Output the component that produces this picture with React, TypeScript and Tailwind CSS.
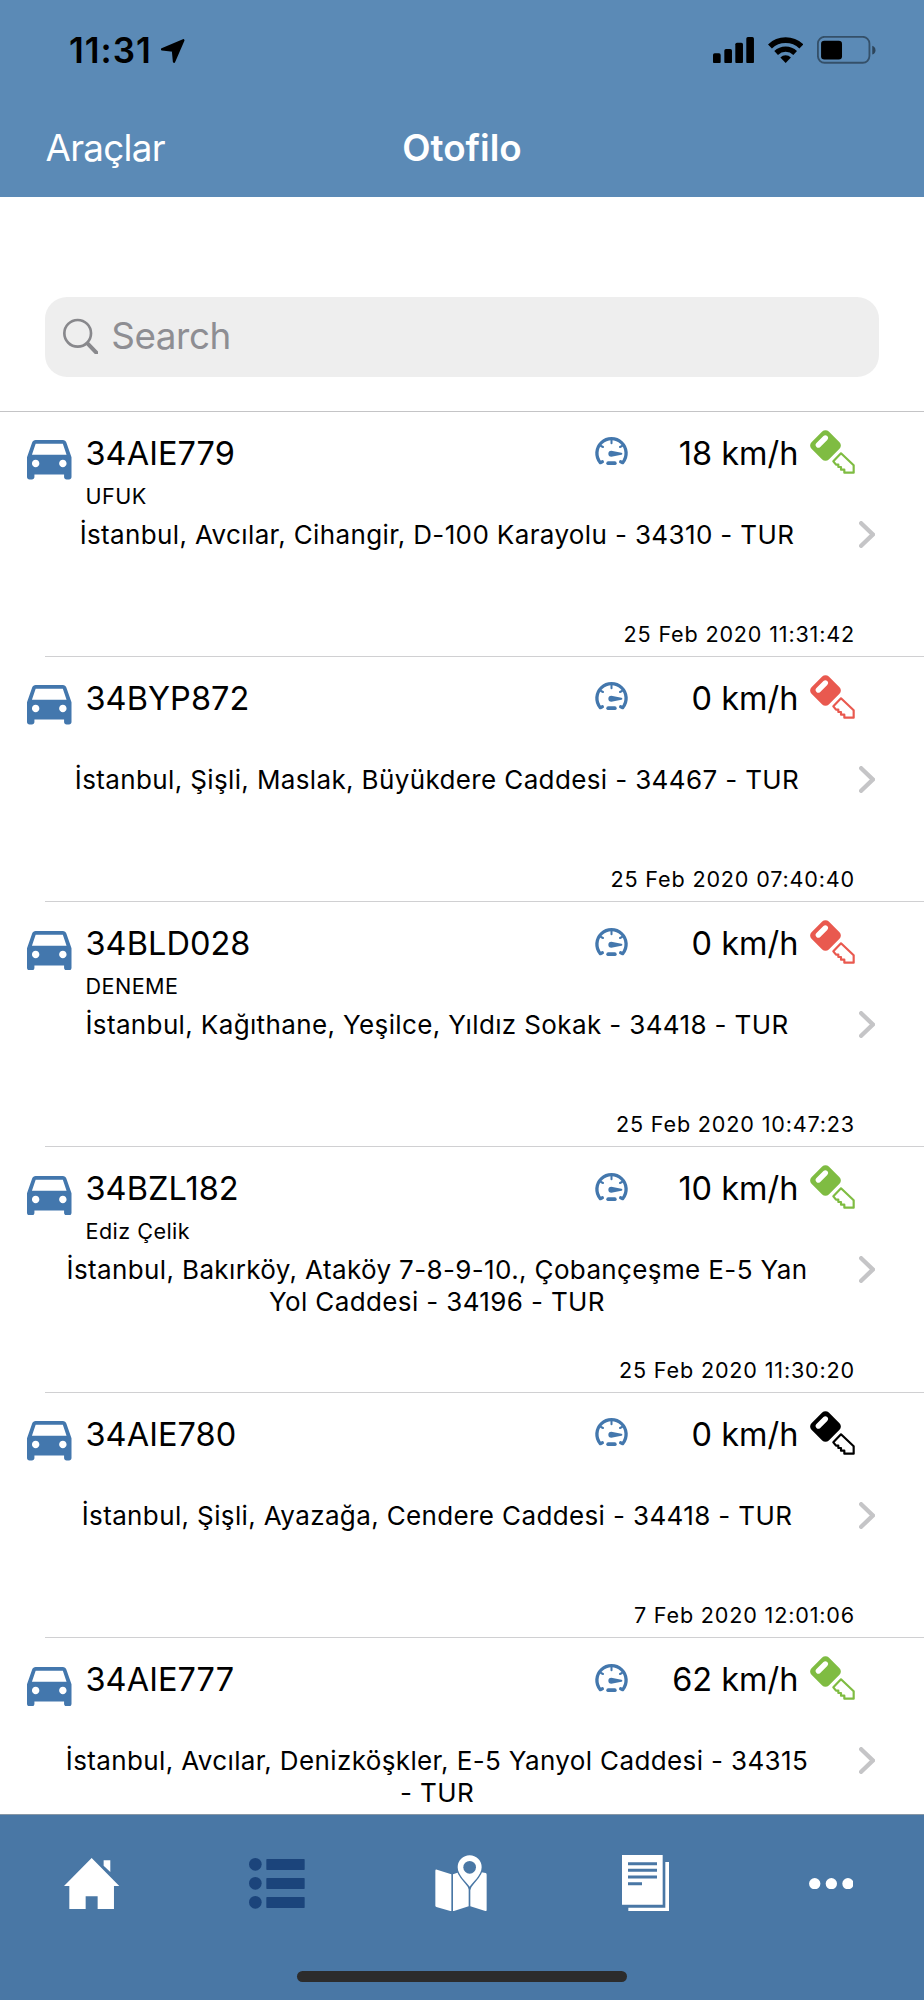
import React from 'react';

type Ignition = 'on' | 'off' | 'unknown';

interface Vehicle {
  plate: string;
  driver?: string;
  speed: number;
  ignition: Ignition;
  address: string;
  date: string;
}

const vehicles: Vehicle[] = [
  { plate: '34AIE779', driver: 'UFUK', speed: 18, ignition: 'on', address: 'İstanbul, Avcılar, Cihangir, D-100 Karayolu - 34310 - TUR', date: '25 Feb 2020 11:31:42' },
  { plate: '34BYP872', speed: 0, ignition: 'off', address: 'İstanbul, Şişli, Maslak, Büyükdere Caddesi - 34467 - TUR', date: '25 Feb 2020 07:40:40' },
  { plate: '34BLD028', driver: 'DENEME', speed: 0, ignition: 'off', address: 'İstanbul, Kağıthane, Yeşilce, Yıldız Sokak - 34418 - TUR', date: '25 Feb 2020 10:47:23' },
  { plate: '34BZL182', driver: 'Ediz Çelik', speed: 10, ignition: 'on', address: 'İstanbul, Bakırköy, Ataköy 7-8-9-10., Çobançeşme E-5 Yan Yol Caddesi - 34196 - TUR', date: '25 Feb 2020 11:30:20' },
  { plate: '34AIE780', speed: 0, ignition: 'unknown', address: 'İstanbul, Şişli, Ayazağa, Cendere Caddesi - 34418 - TUR', date: '7 Feb 2020 12:01:06' },
  { plate: '34AIE777', speed: 62, ignition: 'on', address: 'İstanbul, Avcılar, Denizköşkler, E-5 Yanyol Caddesi - 34315 - TUR', date: '' },
];

const keyColors: Record<Ignition, string> = {
  on: 'text-[#7fbc42]',
  off: 'text-[#e9594f]',
  unknown: 'text-black',
};

const CarIcon = () => (
  <svg viewBox="3 5 18 16" preserveAspectRatio="none" className="mt-[28.5px] h-[39.5px] w-[44.5px] shrink-0 fill-[#4377ad]">
    <path d="M18.92 6.01C18.72 5.42 18.16 5 17.5 5h-11c-.66 0-1.21.42-1.42 1.01L3 12v8c0 .55.45 1 1 1h1c.55 0 1-.45 1-1v-1h12v1c0 .55.45 1 1 1h1c.55 0 1-.45 1-1v-8l-2.08-5.99zM6.5 16c-.83 0-1.5-.67-1.5-1.5S5.67 13 6.5 13s1.5.67 1.5 1.5S7.33 16 6.5 16zm11 0c-.83 0-1.5-.67-1.5-1.5s.67-1.5 1.5-1.5 1.5.67 1.5 1.5-.67 1.5-1.5 1.5zM5 11l1.5-4.5h11L19 11H5z" />
  </svg>
);

const GaugeIcon = () => (
  <svg viewBox="15 21 99 84" className="mt-[25.5px] h-[28px] w-[33px] shrink-0 overflow-visible" fill="none" stroke="#4377ad" strokeLinecap="round">
    <path d="M37 95.500L31 98A43.800 43.800 0 1 1 98 98L92 95.500" strokeWidth="10" strokeLinejoin="round" />
    <path d="M64.500 30v10M33 48l6 3M96 48l-6 3" strokeWidth="6" />
    <path d="M54.500 99.500h20" strokeWidth="11" />
    <path d="M64 62l30 6a3 3 0 0 1 0 6l-30 6a9 9 0 1 1 0-18z" fill="#4377ad" stroke="none" />
  </svg>
);

const KeyIcon = ({ state }: { state: Ignition }) => (
  <svg viewBox="15 15 135 132" className={`ml-[11px] mt-[18px] h-[44px] w-[45px] shrink-0 ${keyColors[state]}`}>
    <rect x="24.800" y="24.800" width="73.400" height="73.400" rx="14" transform="rotate(45 61.500 61.500)" fill="currentColor" />
    <path d="M40 60L61 39" stroke="white" strokeWidth="16" strokeLinecap="round" />
    <path d="M108 85L146 121V143H118V134H108V126H100V119H93L85 109Z" fill="none" stroke="currentColor" strokeWidth="6.500" strokeLinejoin="round" />
  </svg>
);

const StatusBar = () => (
  <div className="flex h-[100px] items-center pl-[69px] pr-[48px]">
    <span className="mt-px text-[35px] font-semibold leading-none tracking-[1px]">11:31</span>
    <svg viewBox="485 116 72 72" className="ml-[9.500px] mt-px h-[24px] w-[24px]">
      <path d="M488 147L552 120L524 184L521 151Z" stroke="black" strokeWidth="7" strokeLinejoin="round" />
    </svg>
    <div className="ml-auto flex items-center">
      <svg viewBox="0 0 124 79" className="h-[26.300px] w-[41.300px]">
        <rect y="49" width="23" height="30" rx="5" />
        <rect x="34" y="36" width="23" height="43" rx="5" />
        <rect x="67" y="17" width="23" height="62" rx="5" />
        <rect x="100" width="23" height="79" rx="5" />
      </svg>
      <svg viewBox="0 0 106 78" className="ml-[13.500px] h-[26px] w-[35.300px]" fill="none" stroke="black">
        <path d="M5.900 28.300A68.500 68.500 0 0 1 100.100 28.300" strokeWidth="17" />
        <path d="M24.400 47.900A41.500 41.500 0 0 1 81.600 47.900" strokeWidth="16" />
        <path d="M53 78L37.200 61.300A23 23 0 0 1 68.800 61.300Z" fill="black" stroke="none" />
      </svg>
      <svg viewBox="0 0 177 83" className="ml-[14px] h-[27.600px] w-[59px]">
        <rect x="2.500" y="2.500" width="155" height="78" rx="20" fill="none" stroke="black" strokeOpacity="0.42" strokeWidth="5.500" />
        <rect x="12" y="14" width="63" height="57" rx="10" />
        <path d="M166 29C179 33 179 52 166 56Z" fillOpacity="0.5" />
      </svg>
    </div>
  </div>
);

const VehicleRow = ({ vehicle }: { vehicle: Vehicle }) => (
  <li className="flex h-[245.300px] shrink-0 flex-col">
    <div className="flex h-[107px] items-start pl-[27px]">
      <CarIcon />
      <div className="ml-[14px] mt-[22px] w-[509px]">
        <div className="text-[32.500px] leading-[40px] tracking-[0.050px]">{vehicle.plate}</div>
        <div className="mt-[8px] text-[21.600px] leading-[28px] tracking-[0.450px]">{vehicle.driver}</div>
      </div>
      <GaugeIcon />
      <div className="mt-[22px] w-[171px] text-right text-[32.500px] leading-[40px]">{vehicle.speed} km/h</div>
      <KeyIcon state={vehicle.ignition} />
    </div>
    <div className="flex items-start pl-[64px]">
      <p className="w-[746px] text-center text-[26px] leading-[32px] tracking-[0.370px]">{vehicle.address}</p>
      <svg viewBox="0 0 49 81" className="ml-[49px] mt-[2px] h-[27px] w-[16.300px]" fill="none" stroke="#c5c5c7" strokeWidth="13" strokeLinecap="round">
        <path d="M6.500 6.500L41.500 40.500L6.500 74.500" />
      </svg>
    </div>
    <div className="mt-auto pb-[8px] pr-[69px] text-right text-[21.600px] leading-[28px] tracking-[0.820px]">{vehicle.date}</div>
    <div className="ml-[45px] h-px shrink-0 bg-[#d0d0d2]" />
  </li>
);

const TabBar = () => (
  <nav className="h-[186px] shrink-0 border-t border-[#8797a6] bg-[#4977a5]">
    <div className="grid h-[137px] grid-cols-5 place-items-center fill-white">
      <svg viewBox="0 0 166 154" className="mr-[1px] h-[51.300px] w-[55.300px]">
        <path d="M83 0L166 84H150V153H101V115H65V153H16V84H0Z" />
        <path d="M119 7H139V42L119 23Z" />
      </svg>
      <svg viewBox="0 0 168 153" className="h-[51px] w-[56px] fill-[#1b447b]">
        <circle cx="19" cy="19" r="19" />
        <circle cx="19" cy="76" r="19" />
        <circle cx="19" cy="133" r="19" />
        <rect x="52" y="3" width="115" height="33" rx="2" />
        <rect x="52" y="60" width="115" height="33" rx="2" />
        <rect x="52" y="117" width="115" height="33" rx="2" />
      </svg>
      <svg viewBox="30 29 156 169" className="mb-[1px] mr-[2px] h-[56.300px] w-[52px]">
        <path d="M31 76Q31 71 36 73L79 87V198L34 185Q31 184 31 181ZM84 87L104 80L131 122V183L84 198ZM136 122L165 80L182 83Q185 84 185 88V194Q185 198 181 197L136 183Z" />
        <path d="M134 126C126 108 98 92 98 66A36 36 0 0 1 170 66C170 92 142 108 134 126Z" className="stroke-[#4977a5]" strokeWidth="9" />
        <path d="M134 124C126 112 98 90 98 66A36 36 0 0 1 170 66C170 90 142 112 134 124Z" />
        <circle cx="134" cy="66" r="19" className="fill-[#4977a5]" />
      </svg>
      <svg viewBox="0 0 141 170" className="mb-[1px] mr-[3px] h-[56.700px] w-[47px]">
        <path d="M0 0H122V149H0ZM130 21H141V170H19V158H130Z" />
        <path d="M18 26H105M18 46H105M18 66H105M18 86H60" className="stroke-[#4977a5]" strokeWidth="9" />
      </svg>
      <svg viewBox="0 0 134 34" className="mr-[1px] h-[11.300px] w-[44.700px]">
        <circle cx="17" cy="17" r="17" />
        <circle cx="67" cy="17" r="17" />
        <circle cx="117" cy="17" r="17" />
      </svg>
    </div>
    <div className="mx-auto mt-[19px] h-[11px] w-[330px] rounded-full bg-[#2c2c2c]" />
  </nav>
);

export default function App() {
  return (
    <div className="flex h-[2000px] w-[924px] flex-col overflow-hidden bg-white font-['Inter',sans-serif] text-black">
      <header className="h-[197px] shrink-0 bg-[#5b8ab6]">
        <StatusBar />
        <div className="grid h-[97px] grid-cols-3 items-center px-[45.500px] text-[36.800px] leading-none text-white">
          <span className="tracking-[-0.700px]">Araçlar</span>
          <h1 className="text-center font-semibold">Otofilo</h1>
        </div>
      </header>

      <div className="shrink-0 border-b border-[#c4c4c6] px-[45px] pb-[33.600px] pt-[100px]">
        <div className="flex h-[80px] items-center rounded-[22px] bg-[#eeeeee] pl-[17.500px]">
          <svg viewBox="187 113 107 110" className="mb-[2px] h-[36.700px] w-[35.700px]" fill="none" stroke="#88888c">
            <circle cx="231" cy="159" r="40" strokeWidth="8" />
            <path d="M261 190L287 217" strokeWidth="12" strokeLinecap="round" />
          </svg>
          <span className="mb-[2px] ml-[13px] text-[36.800px] leading-none tracking-[-0.400px] text-[#8e8e93]">Search</span>
        </div>
      </div>

      <ul className="flex min-h-0 flex-1 flex-col overflow-hidden">
        {vehicles.map((vehicle) => (
          <VehicleRow key={vehicle.plate} vehicle={vehicle} />
        ))}
      </ul>

      <TabBar />
    </div>
  );
}
